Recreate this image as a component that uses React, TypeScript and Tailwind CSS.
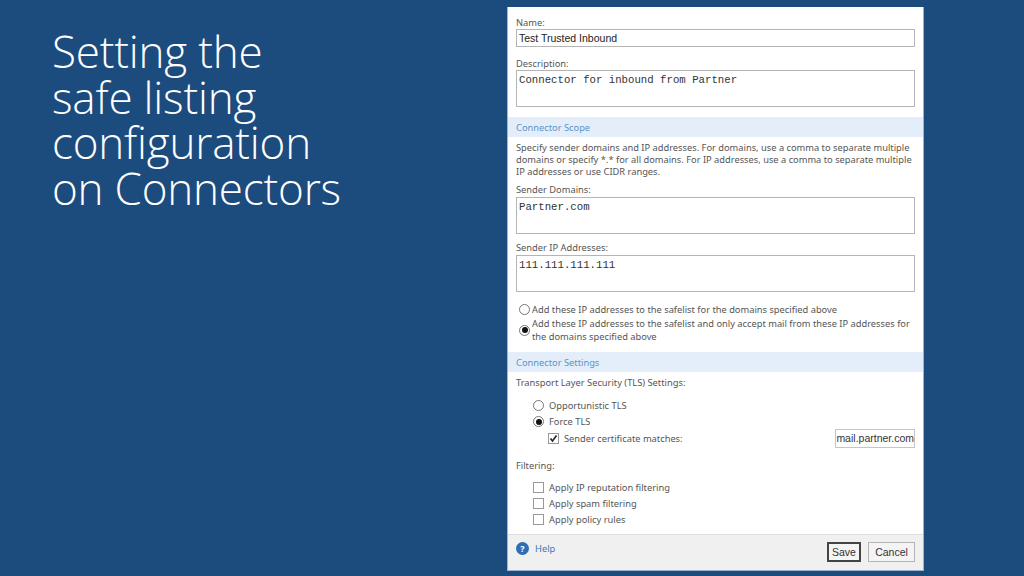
const ui = "font-['Noto_Sans',sans-serif] text-[9.3px] text-[#555]";

function Radio({ on }: { on?: boolean }) {
  return (
    <span className="flex h-[11px] w-[11px] shrink-0 items-center justify-center rounded-full border border-[#777] bg-white">
      {on && <span className="h-[6px] w-[6px] rounded-full bg-[#111]" />}
    </span>
  );
}

function Check({ on }: { on?: boolean }) {
  return (
    <span className="flex h-[11px] w-[11px] shrink-0 items-center justify-center border border-[#999] bg-white">
      {on && (
        <svg width="9" height="9" viewBox="0 0 9 9">
          <path d="M1.5 4.5 L3.5 7 L7.5 1.5" fill="none" stroke="#222" strokeWidth="1.6" />
        </svg>
      )}
    </span>
  );
}

function Mono({ text }: { text: string }) {
  return (
    <div className="h-[37px] w-full border border-[#b5b5b5] px-[2px] pt-[2px] font-['Liberation_Mono',monospace] text-[10.7px] leading-[14px] text-[#333]">
      {text}
    </div>
  );
}

function Band({ text }: { text: string }) {
  return <div className="flex h-[20px] items-center bg-[#e3eefa] px-[8px] text-[#5b93c8]">{text}</div>;
}

export default function App() {
  return (
    <div className="flex h-[576px] w-[1024px] overflow-hidden bg-[#1c4b7e]">
      <div className="w-[507px] pl-[52px] pt-[29px] font-['Open_Sans',sans-serif] text-[44px] font-[350] leading-[45.5px] tracking-[-0.2px] text-white">
        Setting the
        <br />
        safe listing
        <br />
        configuration
        <br />
        on Connectors
      </div>

      <div className={`mt-[7px] flex h-[564px] w-[417px] flex-col border-x border-b border-[#9db4cc] bg-white ${ui} leading-[13px]`}>
        <div className="flex flex-col px-[8px]">
          <div className="mt-[9px] h-[13px]">Name:</div>
          <div className="flex h-[18px] items-center border border-[#b5b5b5] px-[2px] font-['Liberation_Sans',sans-serif] text-[10.5px] text-[#222]">
            Test Trusted Inbound
          </div>
          <div className="mt-[10px] h-[13px]">Description:</div>
          <div>
            <Mono text="Connector for inbound from Partner" />
          </div>
        </div>

        <div className="mt-[10px]">
          <Band text="Connector Scope" />
        </div>

        <div className="flex flex-col px-[8px]">
          <p className="mt-[5px] whitespace-nowrap leading-[12px]">
            Specify sender domains and IP addresses. For domains, use a comma to separate multiple
            <br />
            domains or specify *.* for all domains. For IP addresses, use a comma to separate multiple
            <br />
            IP addresses or use CIDR ranges.
          </p>
          <div className="mt-[5px] h-[13px]">Sender Domains:</div>
          <div className="mt-[1px]">
            <Mono text="Partner.com" />
          </div>
          <div className="mt-[7px] h-[13px]">Sender IP Addresses:</div>
          <div className="mt-[1px]">
            <Mono text="111.111.111.111" />
          </div>

          <div className="mt-[11px] flex h-[13px] items-center gap-[2px] pl-[3px]">
            <Radio />
            <span>Add these IP addresses to the safelist for the domains specified above</span>
          </div>
          <div className="mt-[1px] flex items-center gap-[2px] pl-[3px]">
            <Radio on />
            <span className="whitespace-nowrap">
              Add these IP addresses to the safelist and only accept mail from these IP addresses for
              <br />
              the domains specified above
            </span>
          </div>
        </div>

        <div className="mt-[9px]">
          <Band text="Connector Settings" />
        </div>

        <div className="flex flex-1 flex-col px-[8px]">
          <div className="mt-[4px] h-[13px]">Transport Layer Security (TLS) Settings:</div>
          <div className="mt-[10px] flex h-[13px] items-center gap-[5px] pl-[17px]">
            <Radio />
            <span>Opportunistic TLS</span>
          </div>
          <div className="mt-[3px] flex h-[13px] items-center gap-[5px] pl-[17px]">
            <Radio on />
            <span>Force TLS</span>
          </div>
          <div className="mt-[1px] flex h-[19px] items-center gap-[5px] pl-[32px]">
            <Check on />
            <span>Sender certificate matches:</span>
            <span className="ml-auto flex h-[19px] w-[80px] items-center justify-end border border-[#c5c5c5] font-['Liberation_Sans',sans-serif] text-[10.5px] text-[#333]">
              mail.partner.com
            </span>
          </div>
          <div className="mt-[11px] h-[13px]">Filtering:</div>
          <div className="mt-[9px] flex h-[13px] items-center gap-[5px] pl-[17px]">
            <Check />
            <span>Apply IP reputation filtering</span>
          </div>
          <div className="mt-[3px] flex h-[13px] items-center gap-[5px] pl-[17px]">
            <Check />
            <span>Apply spam filtering</span>
          </div>
          <div className="mt-[3px] flex h-[13px] items-center gap-[5px] pl-[17px]">
            <Check />
            <span>Apply policy rules</span>
          </div>
        </div>

        <div className="flex h-[36px] items-center justify-between border-t border-[#ddd] bg-[#f0f0f0] px-[8px]">
          <div className="-mt-[9px] flex items-center gap-[6px] text-[#3a7ab8]">
            <span className="flex h-[13px] w-[13px] items-center justify-center rounded-full bg-[#2f6db5] text-[9px] font-bold text-white">
              ?
            </span>
            <span>Help</span>
          </div>
          <div className="-mt-[1px] flex gap-[7px] font-['Liberation_Sans',sans-serif] text-[10.5px] text-[#333]">
            <span className="flex h-[20px] w-[34px] items-center justify-center border-2 border-[#444] bg-[#f4f4f4]">
              Save
            </span>
            <span className="flex h-[20px] w-[47px] items-center justify-center border border-[#b5b5b5] bg-[#f4f4f4]">
              Cancel
            </span>
          </div>
        </div>
      </div>
    </div>
  );
}
